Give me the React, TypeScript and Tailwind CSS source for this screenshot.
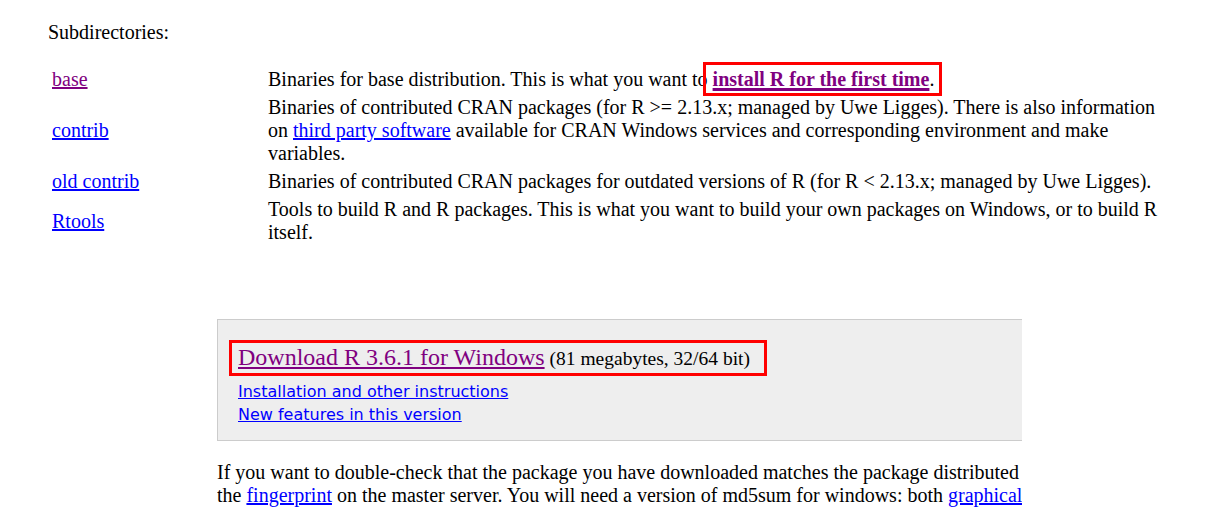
const serif = "font-['Liberation_Serif','Times_New_Roman',serif]";

type Row = { name: string; visited?: boolean; desc: React.ReactNode };

function Link({
  children,
  visited,
  className = "",
}: {
  children: React.ReactNode;
  visited?: boolean;
  className?: string;
}) {
  return (
    <a
      href="#"
      className={`underline ${visited ? "text-[#800080]" : "text-[#0000ff]"} ${className}`}
    >
      {children}
    </a>
  );
}

const rows: Row[] = [
  {
    name: "base",
    visited: true,
    desc: (
      <>
        Binaries for base distribution. This is what you want to{" "}
        <span className="relative">
          <Link visited className="font-bold decoration-[3px]">
            install R for the first time
          </Link>
          .
          <span className="absolute left-[-10px] right-[-8px] top-[-6px] bottom-[-6px] border-[3px] border-[#ff0000] pointer-events-none" />
        </span>
      </>
    ),
  },
  {
    name: "contrib",
    desc: (
      <>
        Binaries of contributed CRAN packages (for R &gt;= 2.13.x; managed by Uwe Ligges).
        There is also information on <Link>third party software</Link> available for CRAN
        Windows services and corresponding environment and make variables.
      </>
    ),
  },
  {
    name: "old contrib",
    desc: (
      <>
        Binaries of contributed CRAN packages for outdated versions of R (for R &lt; 2.13.x;
        managed by Uwe Ligges).
      </>
    ),
  },
  {
    name: "Rtools",
    desc: (
      <>
        Tools to build R and R packages. This is what you want to build your own packages on
        Windows, or to build R itself.
      </>
    ),
  },
];

export default function App() {
  return (
    <div className={`w-[1223px] h-[528px] overflow-hidden bg-white text-black text-[20px] leading-[23px] ${serif}`}>
      <p className="pl-[48px] pt-[21px]">Subdirectories:</p>

      {/* directory table */}
      <div className="grid grid-cols-[216px_900px] gap-y-[5px] pl-[52px] mt-[24px]">
        {rows.map((r) => (
          <div key={r.name} className="contents">
            <div className="flex items-center">
              <Link visited={r.visited}>{r.name}</Link>
            </div>
            <div>{r.desc}</div>
          </div>
        ))}
      </div>

      {/* download box, clipped on the right */}
      <div className="ml-[217px] mt-[75px] w-[805px] overflow-hidden">
        <div className="w-[830px] bg-[#eeeeee] border border-[#cccccc] pl-[11px] pt-[20px] pb-[14px]">
          <div className="inline-block border-[3px] border-[#ff0000] pl-[6px] pr-[14px] py-[1px] leading-[27px]">
            <Link visited className="text-[24px]">
              Download R 3.6.1 for Windows
            </Link>{" "}
            <span className="text-[19.5px]">(81 megabytes, 32/64 bit)</span>
          </div>
          <div className="mt-[4px] pl-[9px] font-['DejaVu_Sans',sans-serif] text-[16px] leading-[23px]">
            <div>
              <Link>Installation and other instructions</Link>
            </div>
            <div>
              <Link>New features in this version</Link>
            </div>
          </div>
        </div>

        <p className="w-[1272px] mt-[20px]">
          If you want to double-check that the package you have downloaded matches the package
          distributed by CRAN, you can compare the <Link>md5sum</Link> of the .exe to the{" "}
          <Link>fingerprint</Link> on the master server. You will need a version of md5sum for
          windows: both <Link>graphical</Link> and <Link>command line versions</Link> are
          available.
        </p>
      </div>
    </div>
  );
}
